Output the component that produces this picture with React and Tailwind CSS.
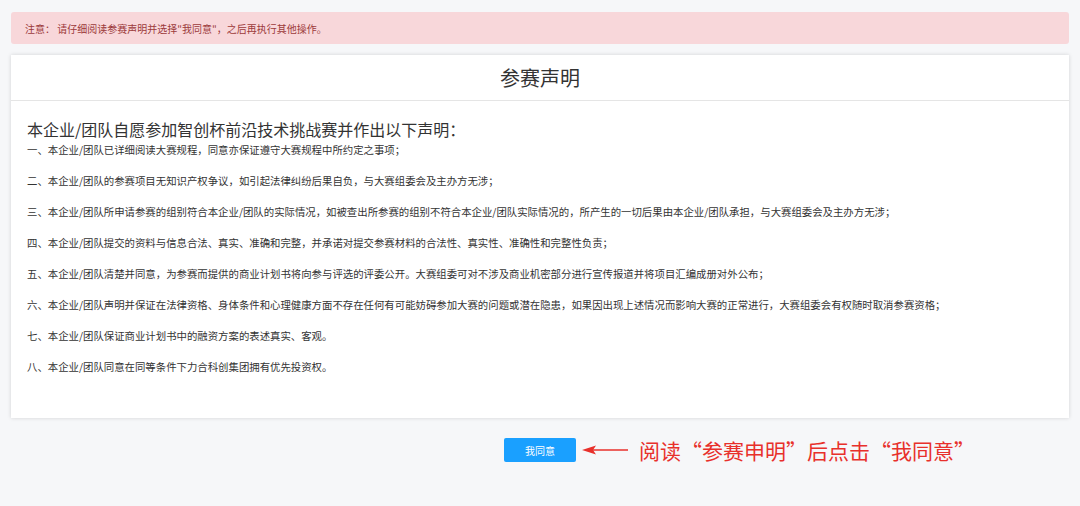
export default function App() {
  const items = [
    "一、本企业/团队已详细阅读大赛规程，同意亦保证遵守大赛规程中所约定之事项；",
    "二、本企业/团队的参赛项目无知识产权争议，如引起法律纠纷后果自负，与大赛组委会及主办方无涉；",
    "三、本企业/团队所申请参赛的组别符合本企业/团队的实际情况，如被查出所参赛的组别不符合本企业/团队实际情况的，所产生的一切后果由本企业/团队承担，与大赛组委会及主办方无涉；",
    "四、本企业/团队提交的资料与信息合法、真实、准确和完整，并承诺对提交参赛材料的合法性、真实性、准确性和完整性负责；",
    "五、本企业/团队清楚并同意，为参赛而提供的商业计划书将向参与评选的评委公开。大赛组委可对不涉及商业机密部分进行宣传报道并将项目汇编成册对外公布；",
    "六、本企业/团队声明并保证在法律资格、身体条件和心理健康方面不存在任何有可能妨碍参加大赛的问题或潜在隐患，如果因出现上述情况而影响大赛的正常进行，大赛组委会有权随时取消参赛资格；",
    "七、本企业/团队保证商业计划书中的融资方案的表述真实、客观。",
    "八、本企业/团队同意在同等条件下力合科创集团拥有优先投资权。",
  ];
  const f = { fontFamily: '"Noto Sans CJK SC", "Noto Sans", sans-serif' };
  return (
    <div className="w-[1080px] h-[506px] bg-[#f6f7f9] pt-[12px] px-[11px]" style={f}>
      <div className="h-[32px] bg-[#f8d7da] rounded-[3px] flex items-center px-[14px] text-[10px] text-[#9c3a3a]">
        注意： 请仔细阅读参赛声明并选择"我同意"，之后再执行其他操作。
      </div>
      <div className="mt-[11px] bg-white h-[363px] shadow-[0_0_4px_rgba(0,0,0,0.15)]">
        <div className="h-[46px] border-b border-[#e5e5e5] flex items-center justify-center text-[20px] text-[#333]">参赛声明</div>
        <div className="px-[16px] pt-[17px]">
          <div className="text-[16px] text-[#333] leading-[22px]">本企业/团队自愿参加智创杯前沿技术挑战赛并作出以下声明：</div>
          <div className="flex flex-col gap-[15px] mt-[2px]">
            {items.map((t) => (
              <div key={t} className="text-[10.4px] leading-[16px] text-[#333]">{t}</div>
            ))}
          </div>
        </div>
      </div>
      <div className="flex items-center mt-[20px] ml-[493px] gap-[6px]">
        <button className="w-[72px] h-[24px] bg-[#1aa0ff] text-white text-[10px] rounded-[2px]">我同意</button>
        <svg width="48" height="12" viewBox="0 0 48 12">
          <line x1="10" y1="6" x2="46" y2="6" stroke="#e8302b" strokeWidth="1.6" />
          <polygon points="0,6 14,1.5 11,6 14,10.5" fill="#e8302b" />
        </svg>
        <div className="text-[21px] text-[#e8302b] ml-[3px] leading-none">阅读“参赛申明”后点击“我同意”</div>
      </div>
    </div>
  );
}
